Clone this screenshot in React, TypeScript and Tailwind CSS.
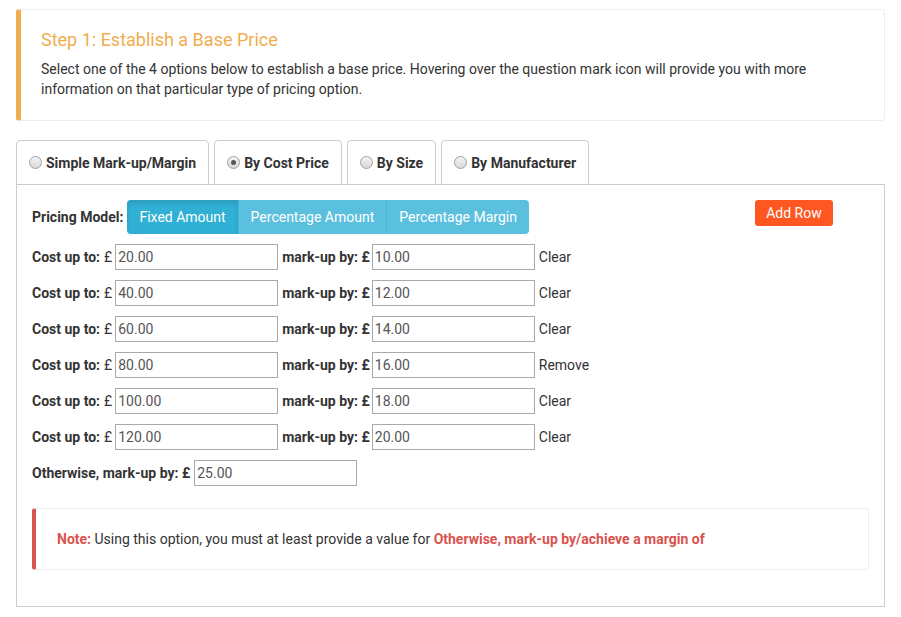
import { useState } from 'react'

const tabs = [
  { label: 'Simple Mark-up/Margin', checked: false },
  { label: 'By Cost Price', checked: true },
  { label: 'By Size', checked: false },
  { label: 'By Manufacturer', checked: false },
]

const rows = [
  { cost: '20.00', markup: '10.00', action: 'Clear' },
  { cost: '40.00', markup: '12.00', action: 'Clear' },
  { cost: '60.00', markup: '14.00', action: 'Clear' },
  { cost: '80.00', markup: '16.00', action: 'Remove' },
  { cost: '100.00', markup: '18.00', action: 'Clear' },
  { cost: '120.00', markup: '20.00', action: 'Clear' },
]

function Radio({ checked }: { checked: boolean }) {
  return (
    <span className="w-[13px] h-[13px] rounded-full border border-[#a0a0a0] bg-gradient-to-b from-[#f4f4f4] to-[#d8d8d8] flex items-center justify-center shrink-0">
      {checked && <span className="w-[5px] h-[5px] rounded-full bg-[#555]" />}
    </span>
  )
}

function Field({ value }: { value: string }) {
  return (
    <input
      defaultValue={value}
      className="w-[163px] h-[26px] border border-[#a9a9a9] px-[2px] text-[14px] text-[#555] outline-none"
    />
  )
}

export default function App() {
  const [model, setModel] = useState('Fixed Amount')

  return (
    <div className="bg-white min-h-[617px] px-[16px] pt-[9px] text-[#333] text-[14px] leading-[20px] font-['Roboto',sans-serif]">
      {/* Step callout */}
      <div className="border border-[#eee] border-l-[5px] border-l-[#f0ad4e] rounded-[3px] pl-[20px] pr-[20px] pt-[18px] pb-[21px]">
        <h4 className="text-[18px] leading-[24px] text-[#f0ad4e] mb-[7px]">Step 1: Establish a Base Price</h4>
        <p>
          Select one of the 4 options below to establish a base price. Hovering over the question mark icon will provide you with more information on that particular type of pricing option.
        </p>
      </div>

      {/* Tabs */}
      <div className="mt-[19px] flex gap-[5px] border-b border-[#ccc]">
        {tabs.map((t) => (
          <div
            key={t.label}
            className="h-[45px] -mb-px border border-[#ccc] rounded-t-[4px] px-[12px] flex items-center gap-[4px] font-bold bg-white"
          >
            <Radio checked={t.checked} />
            <span>{t.label}</span>
          </div>
        ))}
      </div>

      {/* Panel */}
      <div className="border border-t-0 border-[#ccc] px-[15px] pt-[15px] pb-[36px]">
        <div className="flex items-start">
          <span className="font-bold mt-[7px] mr-[4px]">Pricing Model:</span>
          <div className="flex rounded-[4px] overflow-hidden">
            {['Fixed Amount', 'Percentage Amount', 'Percentage Margin'].map((m, i) => (
              <button
                key={m}
                onClick={() => setModel(m)}
                className={`h-[34px] px-[12px] text-white text-[14px] ${i > 0 ? 'border-l border-[#46b8da]' : ''} ${
                  model === m ? 'bg-[#31b0d5] shadow-[inset_0_3px_5px_rgba(0,0,0,0.125)]' : 'bg-[#5bc0de]'
                }`}
              >
                {m}
              </button>
            ))}
          </div>
          <button className="ml-[226px] h-[26px] w-[78px] rounded-[3px] bg-[#ff5722] text-white text-[14px]">
            Add Row
          </button>
        </div>

        <div className="mt-[10px] flex flex-col gap-[10px]">
          {rows.map((r) => (
            <div key={r.cost} className="flex items-center">
              <span className="font-bold">Cost up to:</span>
              <span className="ml-[4px] mr-[3px]">£</span>
              <Field value={r.cost} />
              <span className="font-bold ml-[4px] mr-[2px]">mark-up by: £</span>
              <Field value={r.markup} />
              <span className="ml-[4px]">{r.action}</span>
            </div>
          ))}
          <div className="flex items-center">
            <span className="font-bold mr-[4px]">Otherwise, mark-up by: £</span>
            <Field value="25.00" />
          </div>
        </div>

        <div className="mt-[22px] border border-[#eee] border-l-[4px] border-l-[#d9534f] rounded-[3px] pl-[21px] py-[20px]">
          <span className="font-bold text-[#d9534f]">Note:</span> Using this option, you must at least provide a value for{' '}
          <span className="font-bold text-[#d9534f]">Otherwise, mark-up by/achieve a margin of</span>
        </div>
      </div>
    </div>
  )
}
